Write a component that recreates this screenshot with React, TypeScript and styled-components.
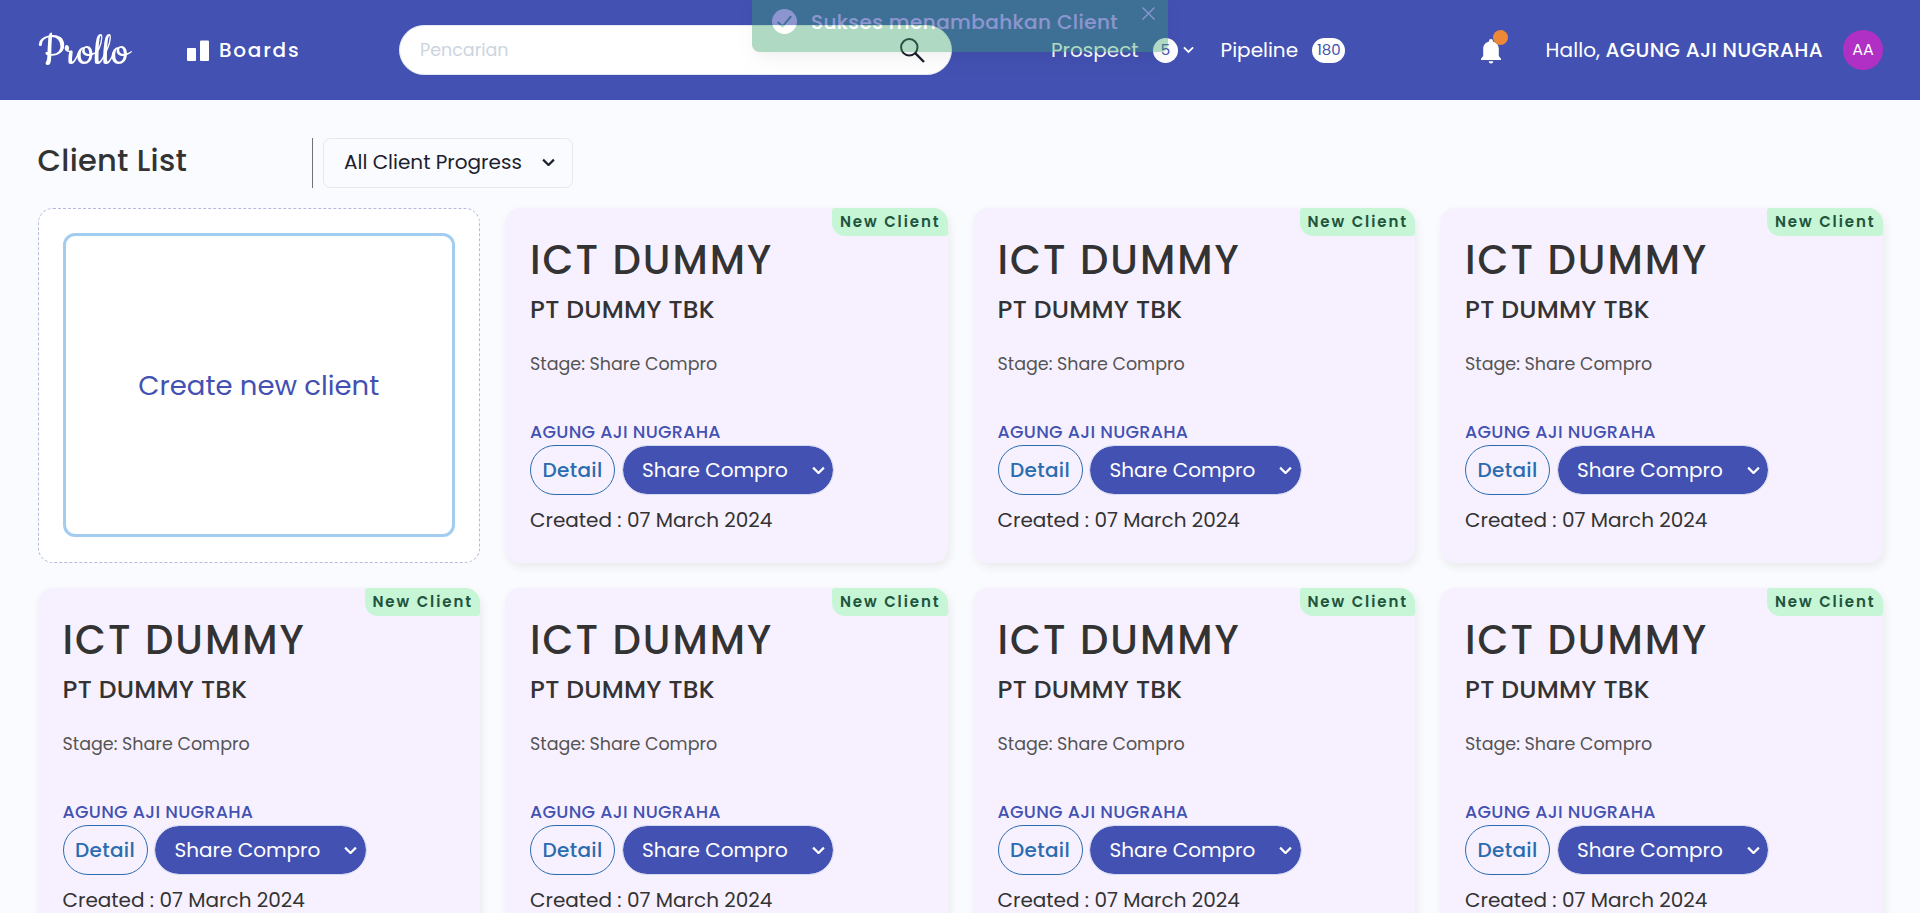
import React from "react";
import styled, { createGlobalStyle } from "styled-components";

const GlobalStyle = createGlobalStyle`
  *, *::before, *::after { box-sizing: border-box; }
  body {
    margin: 0;
    background: #fafbfe;
    color: #333333;
    font-family: Poppins, Inter, sans-serif;
    font-size: 20px;
    line-height: 30px;
  }
  button { font-family: inherit; cursor: pointer; }
  h1, h2, h3, p { margin: 0; }
`;

const Page = styled.div`
  height: 100vh;
  overflow: hidden;
`;

/* ---------- header ---------- */

const Header = styled.header`
  display: flex;
  align-items: center;
  height: 100px;
  padding: 0 37px 0 38px;
  background: #4351b2;
  color: #ffffff;
`;

const Logo = styled.div`
  width: 149px;
  padding-top: 6px;
  font-family: Cookie, "Liberation Serif", cursive;
  font-size: 48.5px;
  line-height: 50px;
`;

const BoardsLink = styled.a`
  display: flex;
  align-items: center;
  gap: 9px;
  width: 212px;
  font-weight: 500;
  letter-spacing: 1.75px;
`;

const SearchBox = styled.div`
  display: flex;
  align-items: center;
  justify-content: space-between;
  width: 553px;
  height: 50px;
  padding: 0 26px 0 20px;
  border: 1px solid #e2e8f0;
  border-radius: 25px;
  background: #ffffff;
  color: #cbd5e0;
  font-size: 17.5px;
`;

const NavLink = styled.a<{ $indent: number }>`
  display: flex;
  align-items: center;
  margin-left: ${(p) => p.$indent}px;
`;

const Count = styled.span`
  display: flex;
  align-items: center;
  justify-content: center;
  min-width: 25px;
  height: 25px;
  margin: 0 5px 0 14.3px;
  padding: 0 4.5px;
  border-radius: 13px;
  background: #ffffff;
  color: #4351b2;
  font-size: 15px;
`;

const Account = styled.div`
  display: flex;
  align-items: center;
  margin-left: auto;
`;

const Bell = styled.div`
  position: relative;
  display: flex;
  margin-right: 45px;
  padding-top: 3px;
`;

const BellDot = styled.span`
  position: absolute;
  top: -6px;
  right: -7px;
  width: 15px;
  height: 15px;
  border-radius: 50%;
  background: #ed8936;
`;

const Greeting = styled.span`
  letter-spacing: 0.1px;
  white-space: pre;

  b {
    font-weight: 500;
    letter-spacing: 0.3px;
  }
`;

const Avatar = styled.div`
  display: flex;
  align-items: center;
  justify-content: center;
  width: 40px;
  height: 40px;
  margin-left: 20px;
  border-radius: 50%;
  background: #b02fc4;
  font-size: 16px;
`;

/* ---------- toast ---------- */

const Toast = styled.div`
  position: absolute;
  top: -8px;
  left: 752px;
  z-index: 10;
  display: flex;
  align-items: flex-start;
  width: 416px;
  height: 60px;
  padding: 15px 13px 15px 20px;
  border-radius: 7.5px;
  background: #38a169;
  color: #ffffff;
  font-weight: 500;
  letter-spacing: 0.4px;
  white-space: nowrap;
  opacity: 0.394;
  box-shadow: 0 12px 19px -4px rgba(0, 0, 0, 0.1), 0 5px 8px -2px rgba(0, 0, 0, 0.05);

  > svg { flex: none; }
`;

const ToastText = styled.span`
  flex: 1;
  margin-left: 14px;
`;

/* ---------- content ---------- */

const Main = styled.main`
  padding: 38px 37.5px 0;
`;

const TitleBar = styled.div`
  display: flex;
  align-items: center;
  height: 50px;
  margin-bottom: 20px;
`;

const PageTitle = styled.h1`
  width: 274.5px;
  padding-bottom: 5px;
  font-size: 30.5px;
  font-weight: 500;
  line-height: 45px;
  letter-spacing: 0.25px;
`;

const Divider = styled.span`
  width: 1px;
  height: 50px;
  margin-right: 10px;
  background: #707378;
`;

const FilterSelect = styled.div`
  display: flex;
  align-items: center;
  justify-content: space-between;
  width: 250px;
  height: 50px;
  padding: 0 17px 2px 20px;
  border: 1px solid #e2e8f0;
  border-radius: 7.5px;
  color: #1a202c;
`;

const Grid = styled.div`
  display: grid;
  grid-template-columns: repeat(4, 1fr);
  grid-auto-rows: 355px;
  gap: 25px;
`;

const CreateCard = styled.div`
  display: flex;
  padding: 24px 24px 25.5px;
  border: 1px dashed #b4b9df;
  border-radius: 15px;
  background: #ffffff;
`;

const CreateButton = styled.button`
  flex: 1;
  padding: 2px 6px 0;
  border: 3px solid #a2cdf1;
  border-radius: 12px;
  background: #ffffff;
  color: #4351b2;
  font-size: 27.5px;
`;

const Card = styled.article`
  position: relative;
  padding: 25px;
  border-radius: 15px;
  background: #f7f1ff;
  box-shadow: 2px 4px 8px rgba(60, 70, 50, 0.09);
`;

const Badge = styled.span`
  position: absolute;
  top: 0;
  right: 0;
  display: flex;
  align-items: center;
  justify-content: center;
  width: 115.5px;
  height: 28px;
  padding-left: 1px;
  border-radius: 3px 15px 3px 13px;
  background: #c6f6d5;
  color: #22543d;
  font-size: 15px;
  font-weight: 600;
  letter-spacing: 1.93px;
  white-space: nowrap;
`;

const ClientName = styled.h2`
  font-size: 40px;
  font-weight: 500;
  line-height: 54px;
  letter-spacing: 2px;
`;

const Company = styled.h3`
  font-size: 25px;
  font-weight: 500;
  line-height: 45px;
  letter-spacing: 0.25px;
`;

const Stage = styled.p`
  margin-top: 19px;
  color: #545454;
  font-size: 17.5px;
  line-height: 27px;
`;

const Owner = styled.p`
  margin: 41px 0 -1px;
  color: #4351b2;
  font-size: 17.5px;
  font-weight: 500;
  line-height: 27px;
  letter-spacing: 0.3px;
`;

const Actions = styled.div`
  display: flex;
  gap: 6.5px;
`;

const DetailButton = styled.button`
  width: 85px;
  height: 50px;
  padding: 0;
  border: 1px solid #2b6cb0;
  border-radius: 25px;
  background: transparent;
  color: #2b6cb0;
  font-size: 20px;
  font-weight: 500;
  letter-spacing: 0.35px;
`;

const StageSelect = styled.div`
  display: flex;
  align-items: center;
  justify-content: space-between;
  width: 212.5px;
  height: 50px;
  padding: 0 8.5px 0 19.5px;
  border: 1px solid #d3d9ee;
  border-radius: 25px;
  background: #4351b2;
  background-clip: padding-box;
  color: #ffffff;
`;

const Created = styled.p`
  margin-top: 10px;
`;

/* ---------- icons ---------- */

function Chevron({ size = 12 }: { size?: number }) {
  return (
    <svg width={size} height={(size * 2) / 3} viewBox="0 0 12 8" fill="none" stroke="currentColor" strokeWidth="2">
      <path d="M1 1.5 6 6.5 11 1.5" />
    </svg>
  );
}

function BoardsIcon() {
  return (
    <svg width="23" height="21" viewBox="0 0 23 21" fill="currentColor">
      <rect x="0" y="8" width="9" height="13" rx="1" />
      <rect x="13" y="0.5" width="9" height="20.5" rx="1" />
    </svg>
  );
}

function SearchIcon() {
  return (
    <svg width="25" height="25" viewBox="0 0 25 25" fill="none" stroke="#1a202c" strokeWidth="2">
      <circle cx="9.3" cy="9.3" r="8.2" />
      <path d="M15.2 15.2 24 24" strokeWidth="2.4" />
    </svg>
  );
}

function BellIcon() {
  return (
    <svg width="20" height="25" viewBox="0 0 20 25" fill="currentColor">
      <path d="M10 0a2 2 0 0 1 2 2v.5c3.4.8 5.8 3.6 5.8 7.3V17l2.2 2.7V21H0v-1.3L2.2 17V9.8C2.2 6.1 4.6 3.3 8 2.5V2a2 2 0 0 1 2-2Z" />
      <path d="M7.7 22.3h4.6a2.3 2.3 0 0 1-4.6 0Z" />
    </svg>
  );
}

function ToastCheck() {
  return (
    <svg width="25" height="29" viewBox="0 -2 25 29">
      <circle cx="12.5" cy="12.5" r="12.5" fill="#ffffff" />
      <path d="M6.2 13.5 10.6 17.3 18.7 7.7" fill="none" stroke="#38a169" strokeWidth="2" strokeLinecap="round" />
    </svg>
  );
}

function CloseIcon() {
  return (
    <svg width="13" height="13" viewBox="0 0 13 13" stroke="currentColor" strokeWidth="1.4">
      <path d="M0.5 0.5 12.5 12.5M12.5 0.5 0.5 12.5" />
    </svg>
  );
}

/* ---------- page ---------- */

const clients = Array.from({ length: 7 }, (_, id) => ({
  id,
  name: "ICT DUMMY",
  company: "PT DUMMY TBK",
  stage: "Share Compro",
  owner: "AGUNG AJI NUGRAHA",
  created: "07 March 2024",
}));

type Client = (typeof clients)[number];

function ClientCard({ client }: { client: Client }) {
  return (
    <Card>
      <Badge>New Client</Badge>
      <ClientName>{client.name}</ClientName>
      <Company>{client.company}</Company>
      <Stage>Stage: {client.stage}</Stage>
      <Owner>{client.owner}</Owner>
      <Actions>
        <DetailButton>Detail</DetailButton>
        <StageSelect>
          {client.stage}
          <Chevron size={13} />
        </StageSelect>
      </Actions>
      <Created>Created : {client.created}</Created>
    </Card>
  );
}

export default function App() {
  return (
    <Page>
      <GlobalStyle />
      <Toast role="status">
        <ToastCheck />
        <ToastText>Sukses menambahkan Client</ToastText>
        <CloseIcon />
      </Toast>
      <Header>
        <Logo>Prollo</Logo>
        <BoardsLink>
          <BoardsIcon />
          Boards
        </BoardsLink>
        <SearchBox>
          Pencarian
          <SearchIcon />
        </SearchBox>
        <NavLink $indent={99}>
          Prospect
          <Count>5</Count>
          <Chevron size={11} />
        </NavLink>
        <NavLink $indent={26.7}>
          Pipeline
          <Count>180</Count>
        </NavLink>
        <Account>
          <Bell>
            <BellIcon />
            <BellDot />
          </Bell>
          <Greeting>
            Hallo, <b>AGUNG AJI NUGRAHA</b>
          </Greeting>
          <Avatar>AA</Avatar>
        </Account>
      </Header>
      <Main>
        <TitleBar>
          <PageTitle>Client List</PageTitle>
          <Divider />
          <FilterSelect>
            All Client Progress
            <Chevron size={13} />
          </FilterSelect>
        </TitleBar>
        <Grid>
          <CreateCard>
            <CreateButton>Create new client</CreateButton>
          </CreateCard>
          {clients.map((client) => (
            <ClientCard key={client.id} client={client} />
          ))}
        </Grid>
      </Main>
    </Page>
  );
}
